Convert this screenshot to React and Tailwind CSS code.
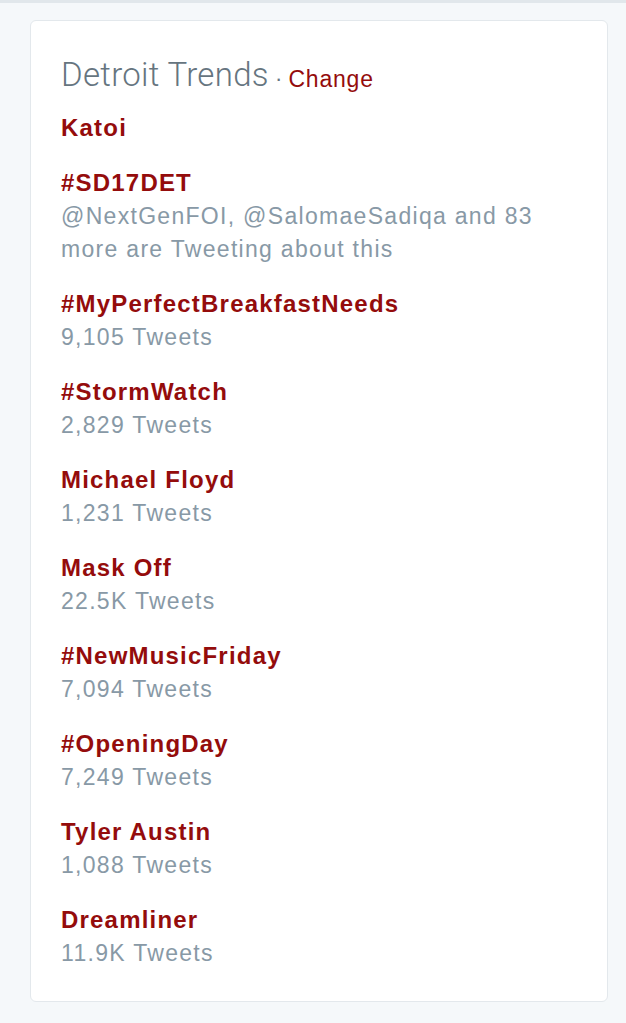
import React from "react";

const trends = [
  { name: "Katoi" },
  { name: "#SD17DET", sub: "@NextGenFOI, @SalomaeSadiqa and 83 more are Tweeting about this" },
  { name: "#MyPerfectBreakfastNeeds", sub: "9,105 Tweets" },
  { name: "#StormWatch", sub: "2,829 Tweets" },
  { name: "Michael Floyd", sub: "1,231 Tweets" },
  { name: "Mask Off", sub: "22.5K Tweets" },
  { name: "#NewMusicFriday", sub: "7,094 Tweets" },
  { name: "#OpeningDay", sub: "7,249 Tweets" },
  { name: "Tyler Austin", sub: "1,088 Tweets" },
  { name: "Dreamliner", sub: "11.9K Tweets" },
];

export default function App() {
  return (
    <div className="min-h-[1023px] w-[626px] bg-[#f5f8fa] border-t-[3px] border-[#e1e7eb] font-['Liberation_Sans',Arial,sans-serif]">
      {/* Trends card */}
      <div className="ml-[30px] mt-[17px] w-[578px] rounded-[6px] border border-[#e3e8ec] bg-white pl-[30px] pr-4 pt-[35px] pb-[31px]">
        <h2 className="leading-[38px] text-[#66757f]">
          <span className="text-[33px] font-light tracking-[0.3px] font-['Roboto',Arial,sans-serif]">Detroit Trends</span>
          <span className="text-[22px]"> · </span>
          <span className="relative top-[1px] text-[23px] tracking-[0.8px] text-[#940c0c]">Change</span>
        </h2>

        <ul className="mt-[10px] flex flex-col gap-[20px]">
          {trends.map((t) => (
            <li key={t.name}>
              <div className="text-[24px] font-bold leading-[35px] tracking-[1.2px] text-[#940c0c]">{t.name}</div>
              {t.sub && (
                <div className="pr-[40px] text-[23px] leading-[33px] tracking-[1.3px] text-[#8899a6]">{t.sub}</div>
              )}
            </li>
          ))}
        </ul>
      </div>
    </div>
  );
}
